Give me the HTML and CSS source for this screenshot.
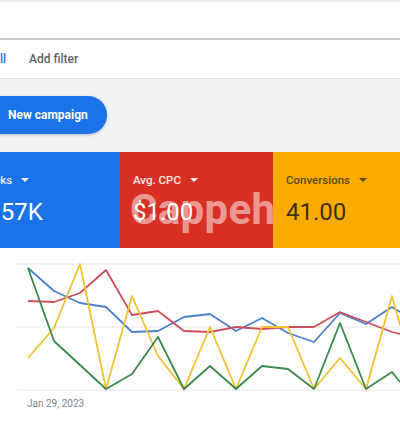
FILE: index.html
```html
<!DOCTYPE html>
<html>
<head>
<meta charset="utf-8">
<link rel="stylesheet" href="styles.css">
</head>
<body>
<div class="page">
  <div class="topbar"></div>
  <div class="filterbar">
    <span class="all">All</span>
    <span class="addfilter">Add filter</span>
  </div>
  <div class="main">
    <button class="new-campaign">New campaign</button>
    <div class="cards">
      <div class="card card-blue">
        <div class="label">Clicks <span class="caret"></span></div>
        <div class="value">2.57K</div>
      </div>
      <div class="card card-red">
        <div class="label">Avg. CPC <span class="caret"></span></div>
        <div class="value">$1.00</div>
      </div>
      <div class="card card-yellow">
        <div class="label">Conversions <span class="caret"></span></div>
        <div class="value">41.00</div>
      </div>
    </div>
  </div>
  <div class="chart">
    <svg class="plot" width="400" height="150" viewBox="0 0 400 150">
      <g class="grid">
        <line x1="17" y1="16" x2="400" y2="16"/>
        <line x1="17" y1="79" x2="400" y2="79"/>
        <line x1="17" y1="142" x2="400" y2="142"/>
      </g>
      <polyline class="l-blue" points="28,20 54,43 80,55 106,59 132,84 158,83 184,69 210,66 236,83 262,70 288,85 314,94 340,65 366,76 392,59 400,64"/>
      <polyline class="l-red" points="28,53 54,54 80,45 106,22 132,67 158,63 184,83 210,84 236,79 262,81 288,79 314,79 340,64 366,74 392,84 400,86"/>
      <polyline class="l-yellow" points="28,110 54,80 80,16 106,141 132,48 158,108 184,141 210,79 236,141 262,79 288,79 314,141 340,110 366,141 392,48 400,77"/>
      <polyline class="l-green" points="28,20 54,93 80,117 106,141 132,126 158,89 184,141 210,118 236,141 262,118 288,121 314,141 340,75 366,141 392,124 400,134"/>
    </svg>
    <div class="date">Jan 29, 2023</div>
  </div>
  <div class="watermark">Cappeh</div>
</div>
</body>
</html>
```

FILE: styles.css
```css
* { box-sizing: border-box; }
html, body {
  margin: 0;
  padding: 0;
  width: 400px;
  height: 424px;
  overflow: hidden;
  background: #ffffff;
  font-family: Roboto, "Liberation Sans", Arial, sans-serif;
}
.page {
  position: relative;
  width: 400px;
  height: 424px;
  overflow: hidden;
}
.topbar {
  height: 40px;
  background: #ffffff;
  border-top: 2px solid #ececec;
  border-bottom: 2px solid #cdcdcd;
  box-shadow: 0 1px 1px rgba(0,0,0,0.06);
}
.filterbar {
  height: 39px;
  display: flex;
  align-items: center;
  background: #ffffff;
  border-bottom: 1px solid #e2e3e5;
  font-size: 12px;
}
.all {
  margin-left: -8px;
  color: #1a73e8;
  font-weight: 500;
}
.addfilter {
  margin-left: 23px;
  color: #5f6368;
  font-weight: 500;
}
.main {
  background: #f1f3f4;
  padding-top: 17px;
}
.new-campaign {
  display: flex;
  align-items: center;
  height: 38px;
  margin: 0 0 0 -20px;
  padding: 0 19px 0 28px;
  border: none;
  border-radius: 19px;
  background: #1a73e8;
  color: #ffffff;
  font-family: Roboto, "Liberation Sans", Arial, sans-serif;
  font-size: 12px;
  font-weight: 700;
  box-shadow: 0 1px 3px rgba(0,0,0,0.25);
}
.cards {
  display: flex;
  margin-top: 18px;
  margin-left: -32px;
  height: 96px;
}
.card {
  width: 153px;
  flex: none;
  padding: 20px 0 0 13px;
}
.card-blue { background: #1a73e8; color: #ffffff; width: 152px; }
.card-red { background: #d93025; color: #ffffff; }
.card-yellow { background: #f9ab00; color: #3c3318; }
.label {
  display: flex;
  align-items: center;
  height: 16px;
  font-size: 11.5px;
  font-weight: 500;
  opacity: 0.9;
}
.card-yellow .label { color: #5a4a14; opacity: 1; }
.caret {
  display: inline-block;
  width: 0;
  height: 0;
  margin-left: 9px;
  border-left: 4px solid transparent;
  border-right: 4px solid transparent;
  border-top: 4px solid currentColor;
}
.value {
  margin-top: 10px;
  font-size: 24px;
  line-height: 28px;
  font-weight: 400;
}
.chart {
  background: #ffffff;
}
.plot { display: block; }
.grid line { stroke: #e6e6e6; stroke-width: 1; }
.plot polyline {
  fill: none;
  stroke-width: 1.8;
  stroke-linejoin: round;
}
.l-blue { stroke: #4a80cc; }
.l-red { stroke: #cc4f5a; }
.l-yellow { stroke: #f2c232; }
.l-green { stroke: #3a8a4c; }
.date {
  padding-left: 27px;
  margin-top: 0;
  font-size: 10px;
  color: #80868b;
}
.watermark {
  position: absolute;
  left: 130px;
  top: 189px;
  font-size: 42px;
  line-height: 42px;
  font-weight: 700;
  color: rgba(255,255,255,0.5);
  letter-spacing: 0.3px;
}
```
